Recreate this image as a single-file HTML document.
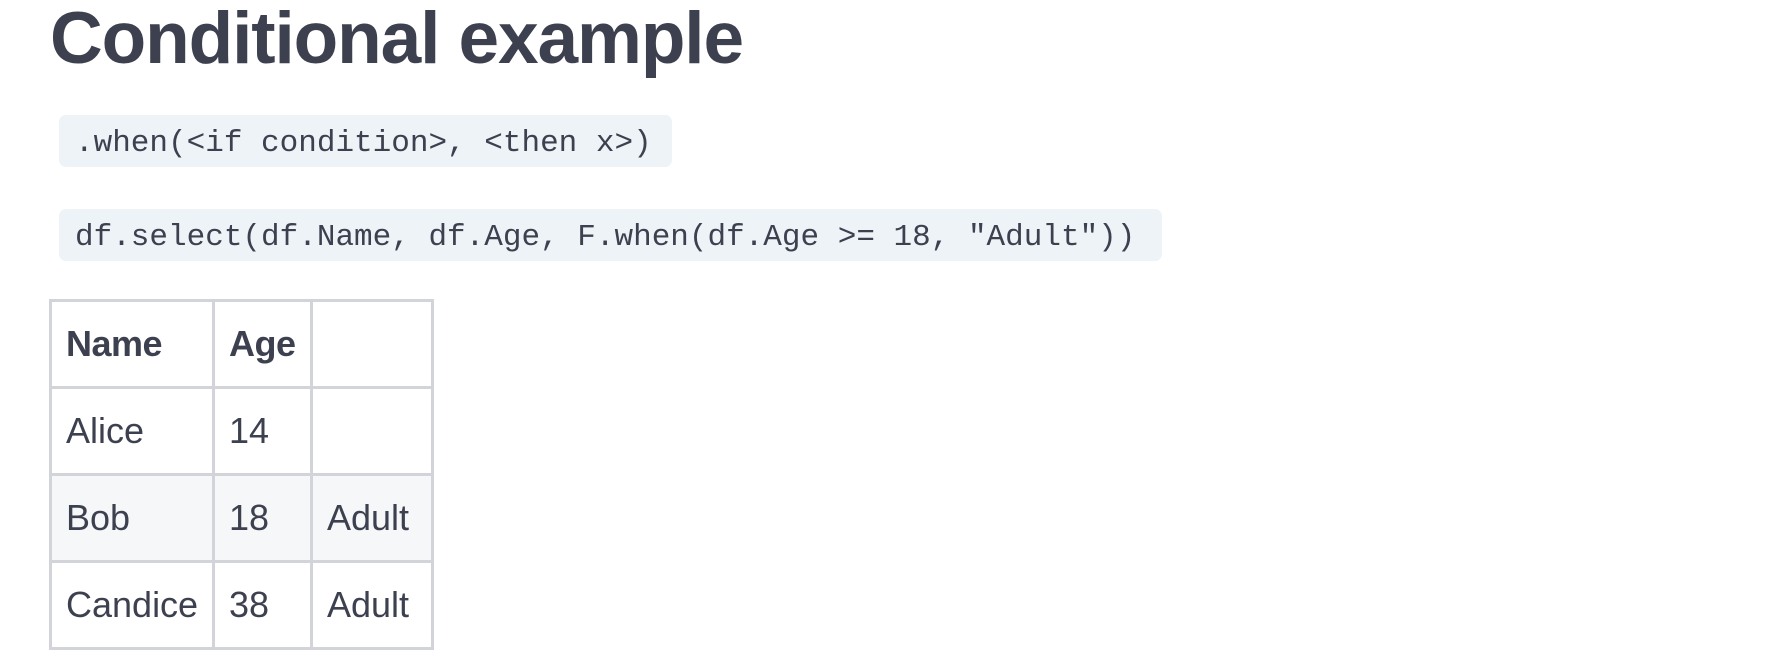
<!DOCTYPE html>
<html><head><meta charset="utf-8"><style>
html,body{margin:0;padding:0;background:#fff;width:1776px;height:668px;overflow:hidden;color:#3d404f;font-family:"Liberation Sans",sans-serif;}
h1{position:absolute;left:50px;top:-11px;margin:0;font-size:73px;font-weight:bold;letter-spacing:-1.1px;line-height:100px;white-space:nowrap;}
.code{position:absolute;left:59px;height:52px;background:#edf3f7;border-radius:7px;font-family:"Liberation Mono",monospace;font-size:31px;line-height:58px;padding:0 16px;box-sizing:border-box;color:#3d404f;white-space:pre;}
table{position:absolute;left:49px;top:299px;border-collapse:collapse;table-layout:fixed;width:382px;font-size:36px;}
td,th{border:3px solid #d3d4d9;height:84px;padding:0 0 0 14px;text-align:left;white-space:nowrap;overflow:visible;}
th{font-weight:bold;letter-spacing:-0.5px;}
tr.alt td{background:#f6f7f9;}
</style></head><body>
<h1>Conditional example</h1>
<div class="code" style="top:115px;width:613px;">.when(&lt;if condition&gt;, &lt;then x&gt;)</div>
<div class="code" style="top:209px;width:1103px;">df.select(df.Name, df.Age, F.when(df.Age &gt;= 18, "Adult"))</div>
<table>
<colgroup><col style="width:163px"><col style="width:98px"><col style="width:121px"></colgroup>
<tr><th>Name</th><th>Age</th><th></th></tr>
<tr><td>Alice</td><td>14</td><td></td></tr>
<tr class="alt"><td>Bob</td><td>18</td><td>Adult</td></tr>
<tr><td>Candice</td><td>38</td><td>Adult</td></tr>
</table>
</body></html>
